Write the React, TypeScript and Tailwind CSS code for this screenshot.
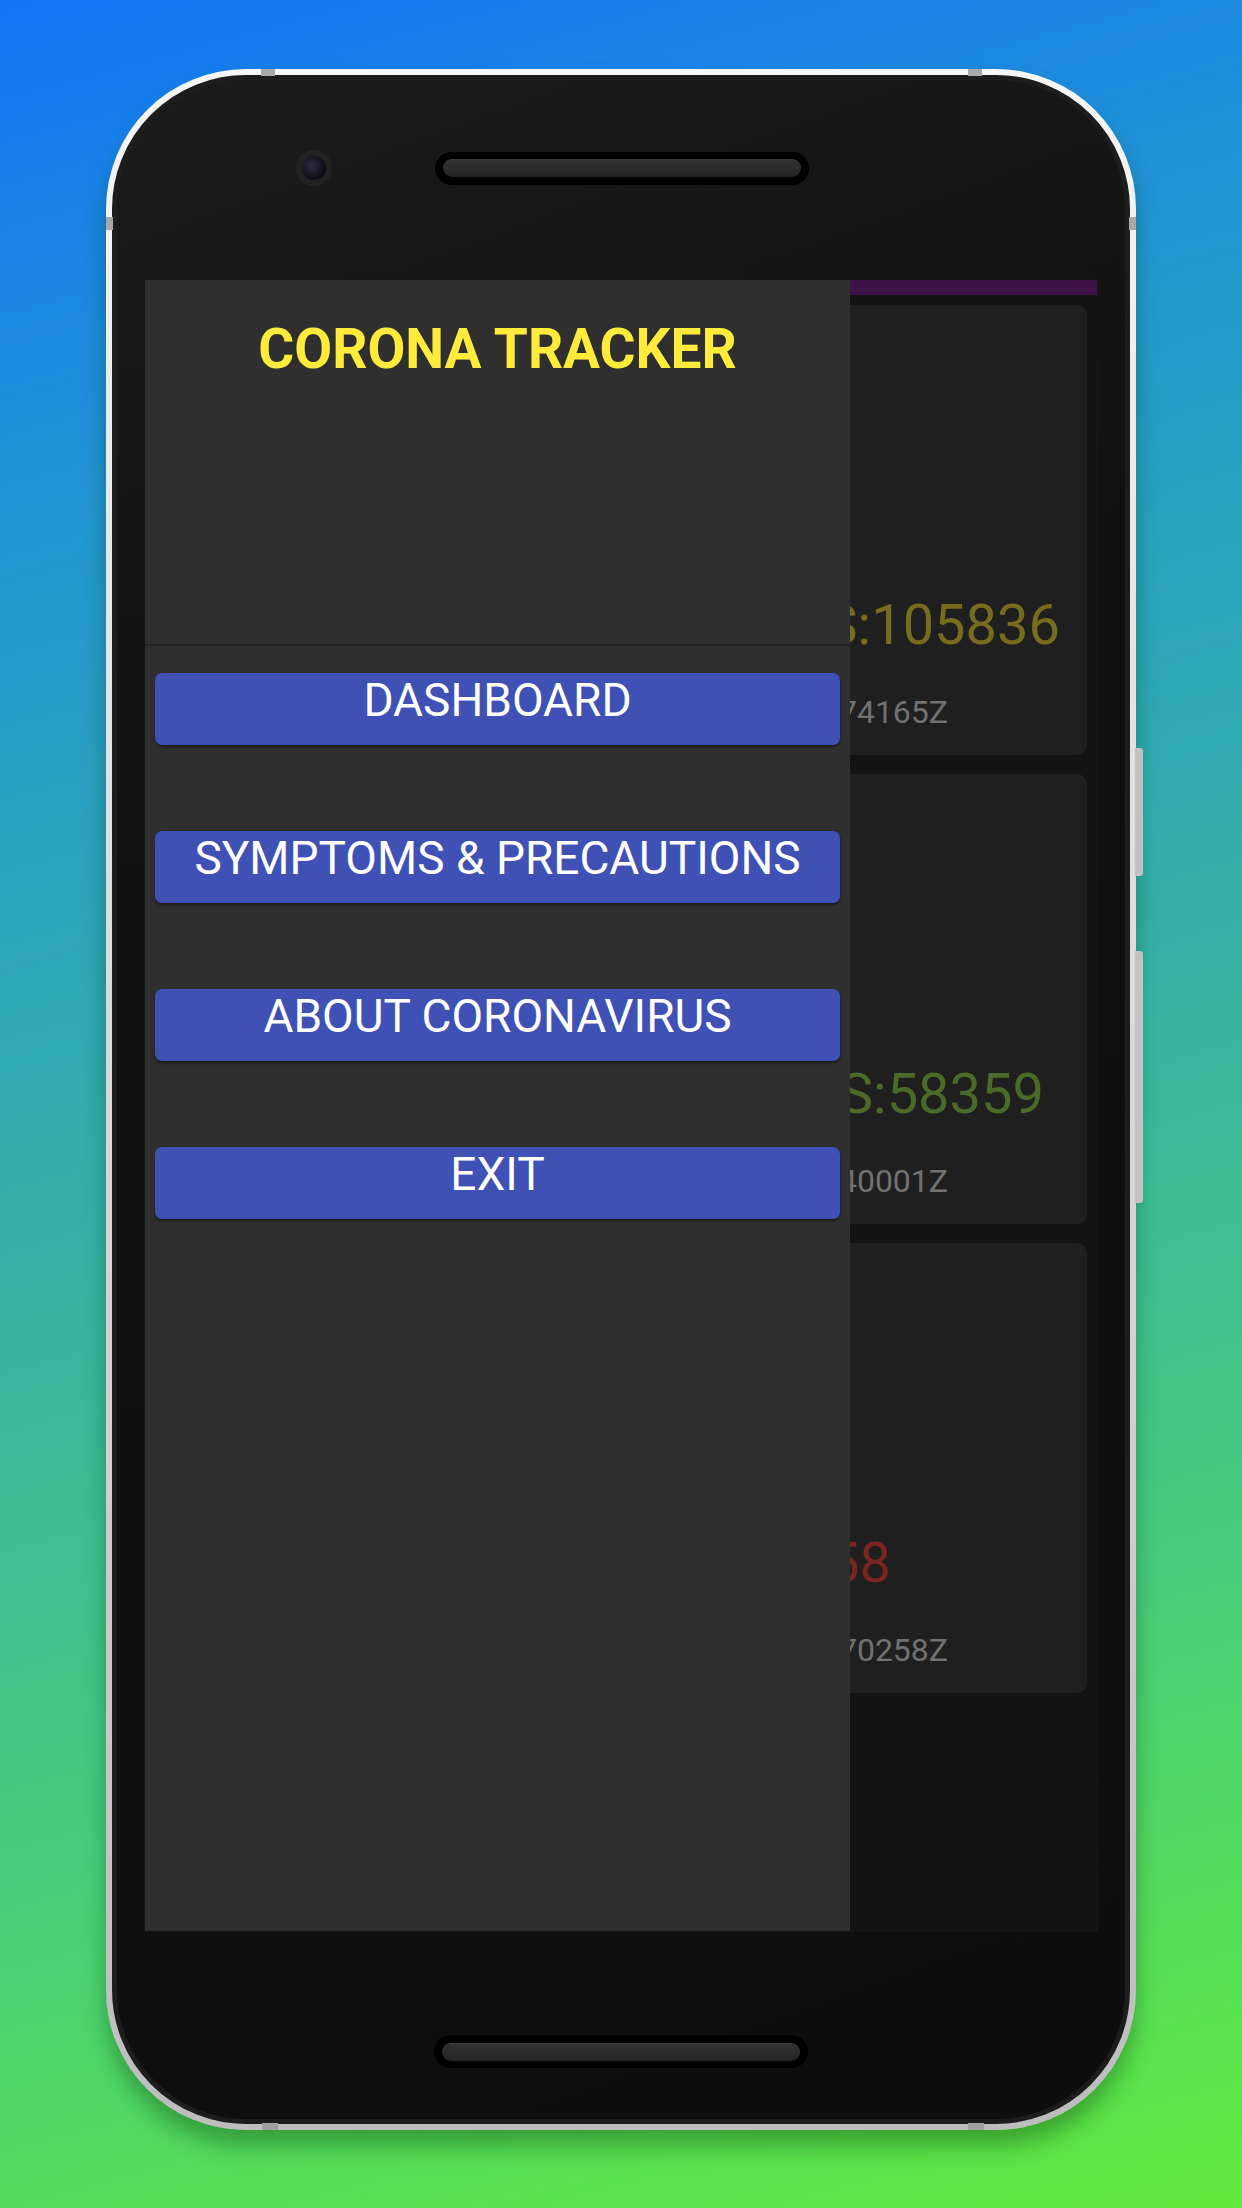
// Right-hand strip of the dashboard that stays visible next to the open drawer
const cards = [
  { value: "S:105836", valuePad: "pr-[27px]", color: "text-[#776c1d]", updated: "74165Z" },
  { value: "S:58359", valuePad: "pr-[43px]", color: "text-[#4a6a28]", updated: "40001Z" },
  { value: "58", valuePad: "pr-[196px]", color: "text-[#7b2520]", updated: "70258Z" },
];

const menu = ["DASHBOARD", "SYMPTOMS & PRECAUTIONS", "ABOUT CORONAVIRUS", "EXIT"];

function Speaker() {
  return (
    <div className="flex h-[33px] w-[374px] items-center rounded-full bg-black px-[8px]">
      <div className="h-[18px] w-full rounded-full border-t border-[#3c3c3c] bg-[linear-gradient(180deg,#323232,#242424)]" />
    </div>
  );
}

function Drawer() {
  return (
    <div className="flex w-[705px] shrink-0 flex-col bg-[#2f2f2f]">
      <div className="h-[366px] border-b-2 border-[#222222] pt-[37px] text-center text-[55px] font-bold leading-[64px] text-[#ffeb3b]">
        CORONA TRACKER
      </div>
      <div className="flex flex-col gap-[86px] px-[10px] pt-[27px]">
        {menu.map((m) => (
          <button
            key={m}
            className="flex h-[72px] items-start justify-center rounded-[7px] bg-[#3f51b5] text-[46px] leading-[54px] text-white shadow-[0_2px_3px_rgba(0,0,0,0.45)]"
          >
            {m}
          </button>
        ))}
      </div>
    </div>
  );
}

function DimmedDashboard() {
  return (
    <div className="flex min-w-0 flex-1 flex-col bg-[#131313]">
      <div className="h-[15px] bg-[#3e1249]" />
      <div className="flex flex-col gap-[19px] pr-[10px] pt-[10px]">
        {cards.map((c) => (
          <div
            key={c.value}
            className="flex h-[450px] flex-col justify-end overflow-hidden rounded-r-[10px] bg-[#1f1f1f] pb-[24px]"
          >
            <div className={`flex justify-end ${c.valuePad}`}>
              <p className={`shrink-0 whitespace-nowrap text-[56px] leading-[66px] ${c.color}`}>{c.value}</p>
            </div>
            <div className="mt-[35px] flex justify-end pr-[139px]">
              <p className="shrink-0 whitespace-nowrap text-[32px] leading-[38px] text-[#717171]">{c.updated}</p>
            </div>
          </div>
        ))}
      </div>
    </div>
  );
}

export default function App() {
  return (
    <div className="h-[2208px] w-[1242px] overflow-hidden bg-[linear-gradient(165deg,#1176f6_0%,#2398d2_22%,#33b0a8_48%,#47cd7c_74%,#60ea3c_100%)] pl-[106px] pt-[69px] font-['Roboto',sans-serif]">
      <div className="relative h-[2061px] w-[1030px] rounded-[140px] bg-[linear-gradient(180deg,#f6f6f6,#d8d8d8_50%,#bdbdbd)] p-[6px] shadow-[0_16px_22px_rgba(0,50,0,0.35)]">
        {/* side keys */}
        <div className="absolute -right-[7px] top-[679px] h-[128px] w-[8px] rounded-r-[3px] bg-[#c2c2c2]" />
        <div className="absolute -right-[7px] top-[882px] h-[252px] w-[8px] rounded-r-[3px] bg-[#c2c2c2]" />
        {/* antenna lines on the rim */}
        <div className="absolute left-[155px] top-0 h-[7px] w-[14px] bg-[#a8a8a8]" />
        <div className="absolute left-[862px] top-0 h-[7px] w-[14px] bg-[#a8a8a8]" />
        <div className="absolute bottom-0 left-[156px] h-[7px] w-[16px] bg-[#a0a0a0]" />
        <div className="absolute bottom-0 left-[862px] h-[7px] w-[16px] bg-[#a0a0a0]" />
        <div className="absolute left-0 top-[148px] h-[13px] w-[7px] bg-[#a8a8a8]" />
        <div className="absolute right-0 top-[148px] h-[13px] w-[7px] bg-[#a8a8a8]" />

        <div className="flex h-full flex-col rounded-[134px] border-[5px] border-[#1d1d1d] bg-[linear-gradient(160deg,#1b1b1b,#101010_35%,#0d0d0d)]">
          {/* earpiece + camera */}
          <div className="h-[199px] pt-[70px]">
            <div className="flex h-[36px] items-center">
              <div className="ml-[179px] flex h-[36px] w-[36px] items-center justify-center rounded-full bg-[#222222]">
                <div className="h-[24px] w-[24px] rounded-full bg-[radial-gradient(circle_at_40%_40%,#2e2a44,#0c0b14_70%)]" />
              </div>
              <div className="ml-[103px]">
                <Speaker />
              </div>
            </div>
          </div>

          {/* screen */}
          <div className="mx-[27px] flex h-[1653px] overflow-hidden border border-[#0f1a12]">
            <Drawer />
            <DimmedDashboard />
          </div>

          {/* bottom speaker */}
          <div className="flex h-[187px] justify-center pt-[103px]">
            <Speaker />
          </div>
        </div>
      </div>
    </div>
  );
}
